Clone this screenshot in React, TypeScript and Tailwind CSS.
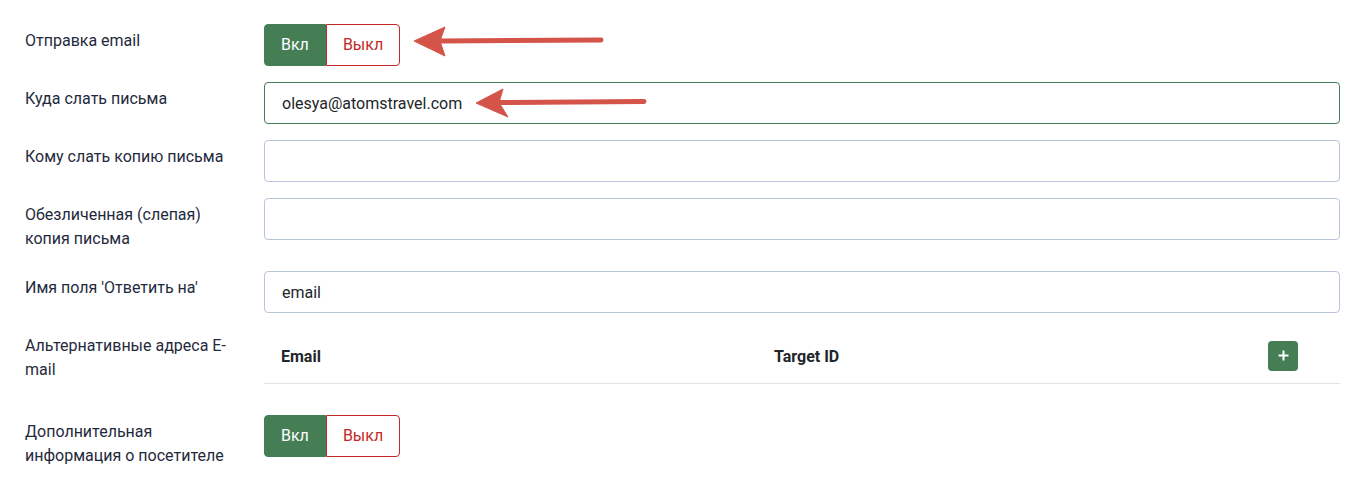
import { type ReactNode } from "react";

const font = { fontFamily: "Roboto, 'Noto Sans', sans-serif" };

function Row({ label, children }: { label: ReactNode; children: ReactNode }) {
  return (
    <div className="flex items-start mb-4">
      <label className="w-[239px] shrink-0 pr-[24px] pt-[5px] pb-[4px] text-[16px] leading-6 text-[#1f2a3d]">
        {label}
      </label>
      <div className="flex-1 min-w-0">{children}</div>
    </div>
  );
}

function Toggle() {
  return (
    <div className="inline-flex h-[42px] text-[16px]">
      <button className="h-full px-[16px] bg-[#457d54] text-white rounded-l-[4px] border border-[#457d54]">
        Вкл
      </button>
      <button className="h-full px-[16px] bg-white text-[#c52827] rounded-r-[4px] border border-[#c52827]">
        Выкл
      </button>
    </div>
  );
}

function TextInput({ value = "", active = false }: { value?: string; active?: boolean }) {
  return (
    <input
      readOnly
      value={value}
      className={`block w-full h-[42px] px-[17px] rounded-[4px] border bg-white text-[16px] text-[#22262a] outline-none ${
        active ? "border-[#457d54]" : "border-[#b8c4d9]"
      }`}
    />
  );
}

function AltEmails() {
  return (
    <table className="w-full mb-[15px] border-collapse text-[16px] text-[#22262a]">
      <thead>
        <tr className="h-[54px] border-b border-[#dfe3e7]">
          <th className="w-[493px] px-[17px] pt-[2px] text-left font-bold">Email</th>
          <th className="w-[493px] px-[17px] pt-[2px] text-left font-bold">Target ID</th>
          <th className="px-[18px] text-left">
            <button className="w-[30px] h-[30px] rounded-[4px] bg-[#457d54] text-white flex items-center justify-center">
              <svg width="11" height="11" viewBox="0 0 11 11">
                <path d="M5.5 0.5v10M0.5 5.5h10" stroke="white" strokeWidth="2" />
              </svg>
            </button>
          </th>
        </tr>
      </thead>
    </table>
  );
}

export default function App() {
  return (
    <div className="relative w-[1366px] h-[482px] bg-white overflow-hidden" style={font}>
      <div className="pt-6 pl-[25px] pr-[26px]">
        <Row label="Отправка email">
          <Toggle />
        </Row>
        <Row label="Куда слать письма">
          <TextInput value="olesya@atomstravel.com" active />
        </Row>
        <Row label="Кому слать копию письма">
          <TextInput />
        </Row>
        <Row label="Обезличенная (слепая) копия письма">
          <TextInput />
        </Row>
        <Row label="Имя поля 'Ответить на'">
          <TextInput value="email" />
        </Row>
        <Row label="Альтернативные адреса E-mail">
          <AltEmails />
        </Row>
        <Row label="Дополнительная информация о посетителе">
          <Toggle />
        </Row>
      </div>

      {/* callout arrows */}
      <svg className="absolute inset-0 pointer-events-none" width="1366" height="482">
        <g fill="#d4544a" stroke="#d4544a">
          <line x1="440" y1="41" x2="601" y2="40" strokeWidth="5" strokeLinecap="round" />
          <polygon points="414,41 445,27 440,41 445,56" strokeWidth="1" strokeLinejoin="round" />
          <line x1="500" y1="102.5" x2="644" y2="101.5" strokeWidth="5" strokeLinecap="round" />
          <polygon points="476,103 503,89 499,102.5 508,117" strokeWidth="1" strokeLinejoin="round" />
        </g>
      </svg>
    </div>
  );
}
